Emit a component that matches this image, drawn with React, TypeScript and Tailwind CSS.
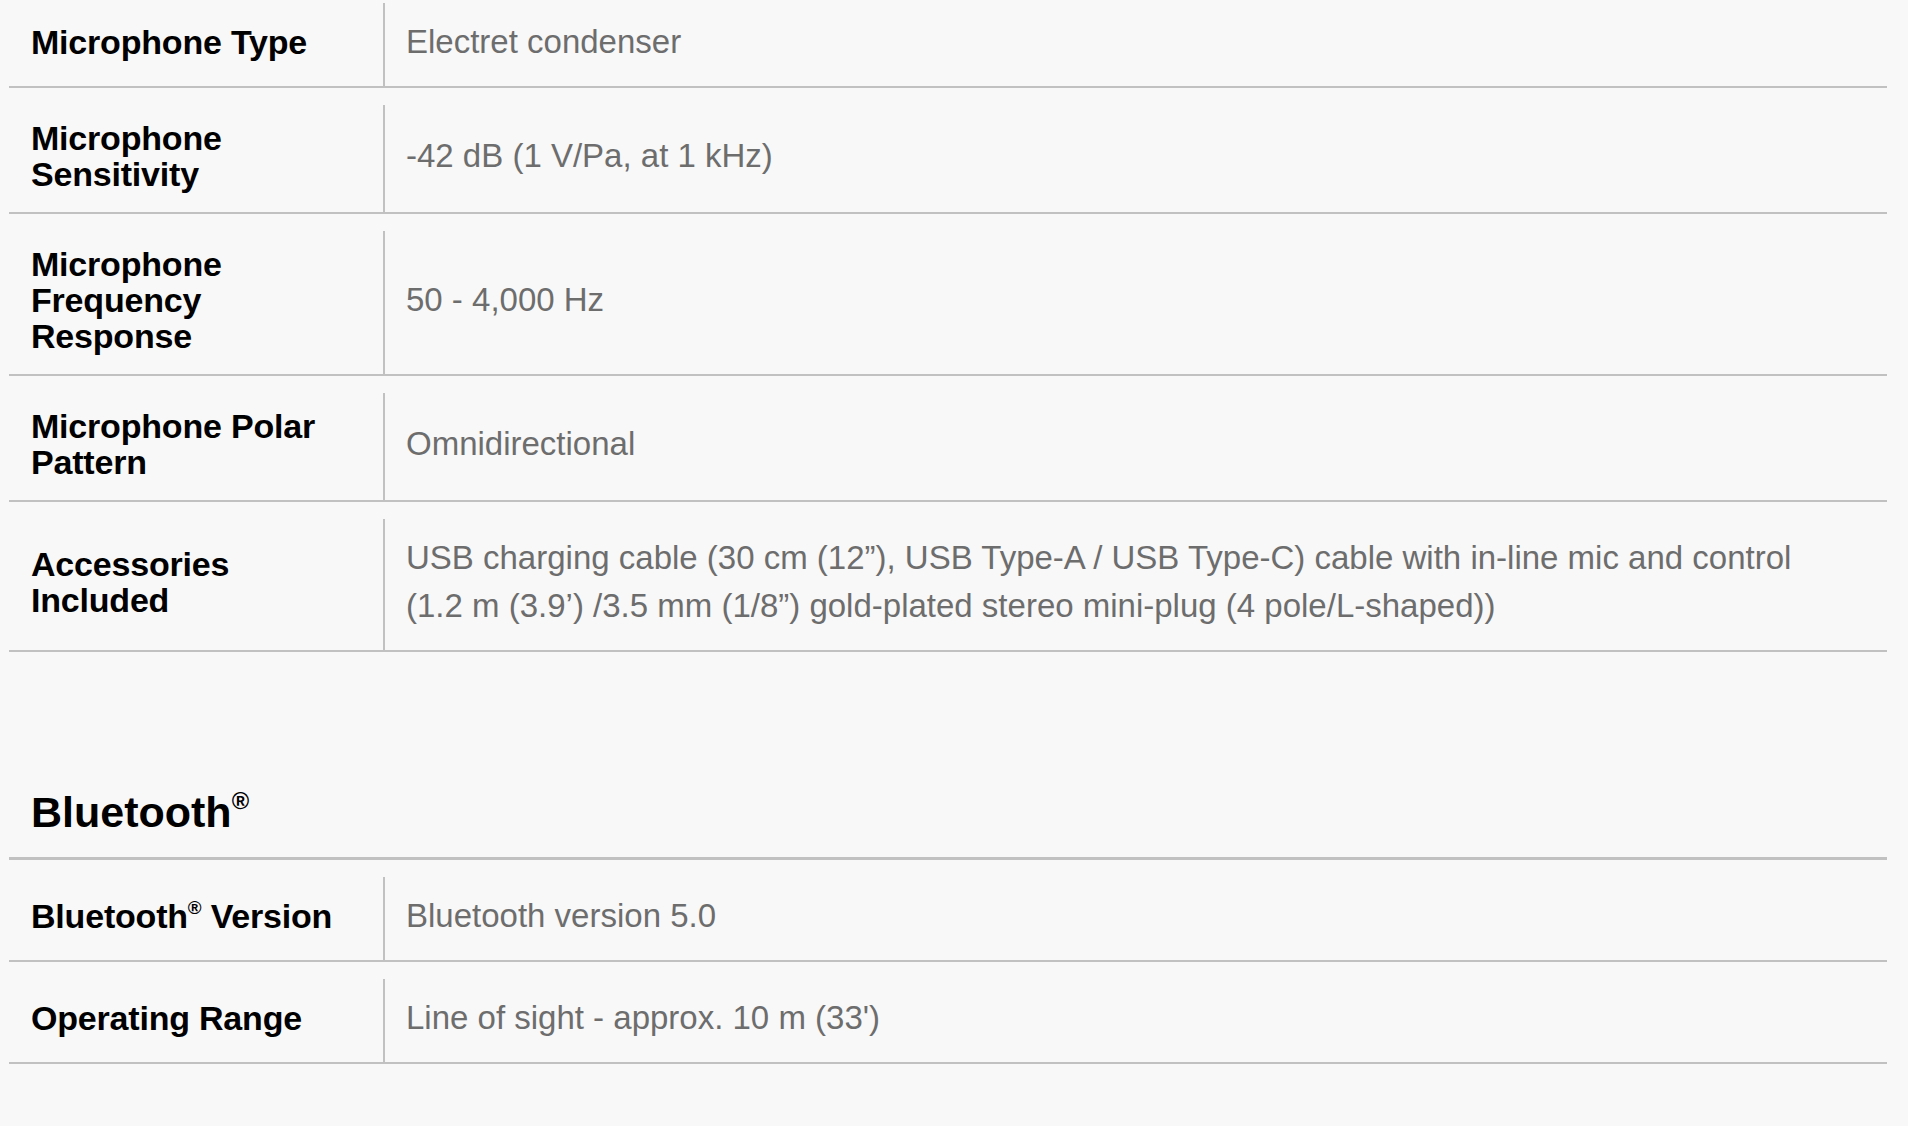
import React from "react";

type Row = { label: React.ReactNode; value: React.ReactNode };

const sup = (
  <sup className="text-[0.55em] relative top-[-0.1em] align-super leading-none">®</sup>
);

const mic: Row[] = [
  { label: "Microphone Type", value: "Electret condenser" },
  { label: "Microphone Sensitivity", value: "-42 dB (1 V/Pa, at 1 kHz)" },
  { label: "Microphone Frequency Response", value: "50 - 4,000 Hz" },
  { label: "Microphone Polar Pattern", value: "Omnidirectional" },
  {
    label: "Accessories Included",
    value:
      "USB charging cable (30 cm (12\u201D), USB Type-A / USB Type-C) cable with in-line mic and control (1.2 m (3.9\u2019) /3.5 mm (1/8\u201D) gold-plated stereo mini-plug (4 pole/L-shaped))",
  },
];

const bt: Row[] = [
  {
    label: (
      <>
        Bluetooth{sup} Version
      </>
    ),
    value: "Bluetooth version 5.0",
  },
  { label: "Operating Range", value: "Line of sight - approx. 10 m (33')" },
];

function SpecRow({ row }: { row: Row }) {
  return (
    <div className="flex border-b-2 border-[#c1c1c1] pt-[17px]">
      <div className="w-[374px] shrink-0 flex items-center pl-[22px] pt-[15px] pb-[20px] text-[34px] leading-[36px] font-bold text-black tracking-[-0.2px]">
        <div className="max-w-[318px]">{row.label}</div>
      </div>
      <div className="flex-1 flex items-center border-l-2 border-[#c1c1c1] pl-[21px] pr-[60px] pt-[15px] pb-[20px] text-[33px] leading-[48px] text-[#6d6d6d]">
        <div>{row.value}</div>
      </div>
    </div>
  );
}

export default function App() {
  return (
    <div
      className="min-h-[1126px] w-full bg-[#f8f8f8] overflow-hidden"
      style={{ fontFamily: '"Liberation Sans", Arial, Helvetica, sans-serif' }}
    >
      <div className="pl-[9px] pr-[21px]">
        <div className="-mt-[14px]">
          {mic.map((r, i) => (
            <SpecRow key={i} row={r} />
          ))}
        </div>
        <h2 className="mt-[139px] pl-[22px] pb-[23px] text-[43px] leading-none font-bold text-black border-b-[3px] border-[#c1c1c1]">
          Bluetooth{sup}
        </h2>
        <div>
          {bt.map((r, i) => (
            <SpecRow key={i} row={r} />
          ))}
        </div>
      </div>
    </div>
  );
}
